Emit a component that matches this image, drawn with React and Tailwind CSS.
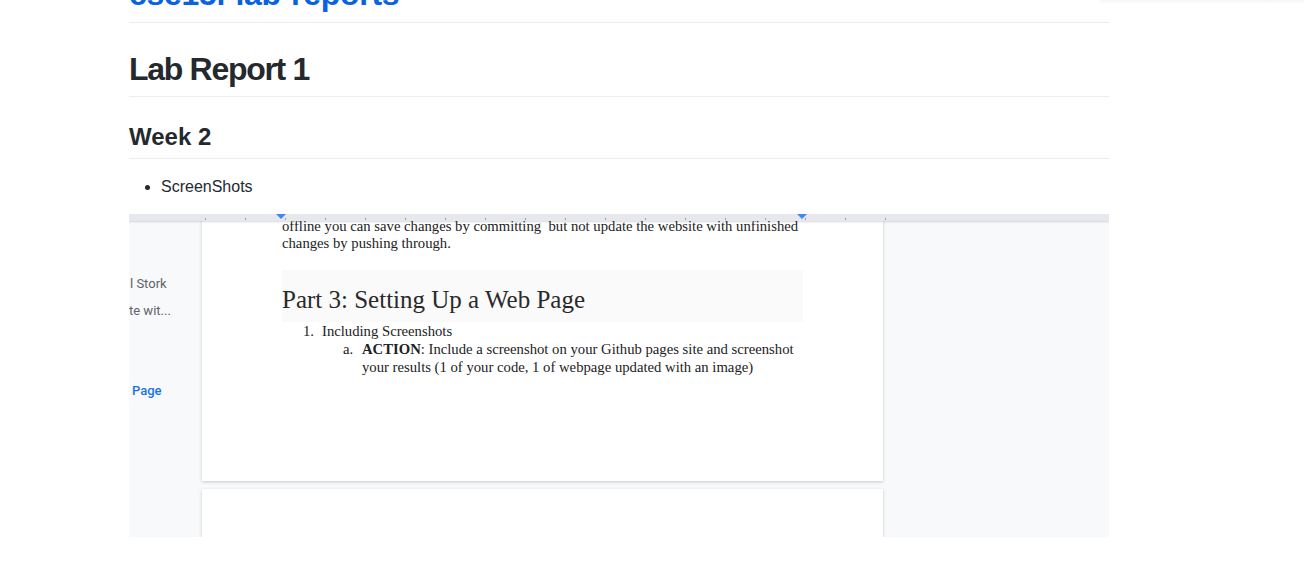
import React from 'react';

const sans = "font-['Liberation_Sans',Arial,sans-serif]";
const serif = "font-['Liberation_Serif','Times_New_Roman',serif]";

// ruler strip on top of the docs screenshot
function Ruler() {
  const ticks = [];
  for (let x = 76; x < 760; x += 40) ticks.push(x);
  return (
    <div className="absolute left-0 top-0 z-10 h-[7px] w-full bg-[#e6e8ee] shadow-[0_1px_2px_rgba(60,64,67,0.2)]">
      <svg width="980" height="7" className="block">
        {ticks.map((x) => (
          <rect key={x} x={x} y="4" width="1" height="2" fill="#9aa0a6" />
        ))}
        <path d="M147 0 L157 0 L152 5 Z" fill="#4285f4" />
        <path d="M668 0 L678 0 L673 5 Z" fill="#4285f4" />
      </svg>
    </div>
  );
}

function DocShot() {
  return (
    <div className="relative mt-[15px] flex h-[323px] w-[980px] overflow-hidden bg-[#f8f9fa]">
      <Ruler />

      {/* left outline panel */}
      <div className="w-[72px] shrink-0 overflow-hidden pl-[1px] font-['Roboto',Arial,sans-serif] text-[13px] leading-[16px]">
        <div className="mt-[62px] text-[#5f6368]">l Stork</div>
        <div className="mt-[11px] -ml-[1px] text-[#5f6368]">te wit...</div>
        <div className="mt-[64px] pl-[2px] font-medium text-[#1a73e8]">Page</div>
      </div>

      {/* pages */}
      <div className="flex w-[682px] shrink-0 flex-col gap-[8px] pl-[1px]">
        <div className={`h-[267px] bg-white pl-[80px] pt-[4px] shadow-[0_1px_3px_rgba(60,64,67,0.25)] ${serif} text-[14.7px] leading-[18px] text-[#222]`}>
          <div className="whitespace-nowrap leading-[16px]">offline you can save changes by committing&nbsp; but not update the website with unfinished</div>
          <div className="whitespace-nowrap">changes by pushing through.</div>

          <div className="mt-[18px] h-[52px] w-[521px] bg-[#fafafa] pt-[16px] text-[25px] leading-[28px] text-[#2a2a2a]">
            Part 3: Setting Up a Web Page
          </div>

          <div className="flex whitespace-nowrap pl-[21px]">
            <span className="w-[19px]">1.</span>
            <span>Including Screenshots</span>
          </div>
          <div className="flex whitespace-nowrap pl-[61px]">
            <span className="w-[19px]">a.</span>
            <div>
              <div><b>ACTION</b>: Include a screenshot on your Github pages site and screenshot</div>
              <div>your results (1 of your code, 1 of webpage updated with an image)</div>
            </div>
          </div>
        </div>
        <div className="flex-1 bg-white shadow-[0_1px_3px_rgba(60,64,67,0.25)]" />
      </div>

      <div className="flex-1" />
    </div>
  );
}

export default function App() {
  return (
    <div className={`relative min-h-screen bg-white ${sans} text-[#24292e]`}>
      <div className="absolute right-0 top-0 h-[4px] w-[204px] bg-gradient-to-b from-[#f5f5f5] to-transparent" />

      <div className="ml-[129px] w-[980px] pb-8">
        {/* site title, scrolled mostly out of view */}
        <div className="h-[23px] overflow-hidden border-b border-[#eaecef]">
          <h1 className="-mt-[26px] text-[32px] font-bold leading-[40px] tracking-[-0.3px] text-[#0a63de]">
            cse15l-lab-reports
          </h1>
        </div>

        <h1 className="mt-[26px] border-b border-[#eaecef] pb-[7px] text-[32px] font-semibold leading-[40px] tracking-[-1.3px]">
          Lab Report 1
        </h1>

        <h2 className="mt-[25px] border-b border-[#eaecef] pb-[6px] text-[24px] font-semibold leading-[30px]">
          Week 2
        </h2>

        <ul className="mt-[16px] list-disc pl-8 text-[16px] leading-[24px]">
          <li>ScreenShots</li>
        </ul>

        <DocShot />
      </div>
    </div>
  );
}
